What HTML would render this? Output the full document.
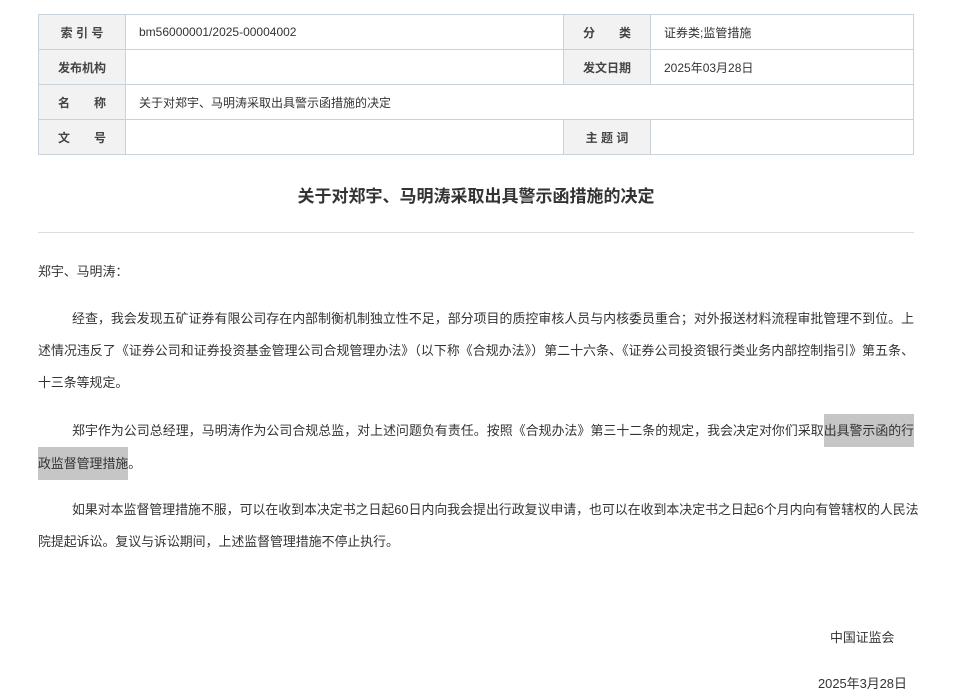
<!DOCTYPE html>
<html><head><meta charset="utf-8"><style>
body{margin:0;background:#fff;font-family:"Liberation Sans","Noto Sans CJK SC",sans-serif;color:#333;width:962px;height:699px;overflow:hidden;position:relative}
table{position:absolute;left:38px;top:14px;border-collapse:collapse;font-size:12px;width:876px}
td{border:1px solid #c8d2dc;height:34px;padding:0;color:#333}
td.h{background:#f2f2f2;font-weight:bold;text-align:center;width:86px;color:#444}
td.v{padding-left:13px}
h1{position:absolute;left:38px;width:876px;top:182px;margin:0;text-align:center;font-size:17px;font-weight:bold;color:#333}
.hr{position:absolute;left:38px;width:876px;top:232px;border-top:1px solid #ddd}
.t{position:absolute;left:38px;width:876px;font-size:12.9px;line-height:32px}
.l{display:block;white-space:nowrap;text-align:justify;text-align-last:justify}
.e{display:block;white-space:nowrap}
.i{padding-left:34px}
.hl{background:#c6c6c6;display:inline-block;line-height:33px}
</style></head><body>
<table>
<tr><td class="h">索 引 号</td><td class="v" style="width:424px">bm56000001/2025-00004002</td><td class="h">分　　类</td><td class="v">证券类;监管措施</td></tr>
<tr><td class="h">发布机构</td><td class="v"></td><td class="h">发文日期</td><td class="v">2025年03月28日</td></tr>
<tr><td class="h">名　　称</td><td class="v" colspan="3">关于对郑宇、马明涛采取出具警示函措施的决定</td></tr>
<tr><td class="h">文　　号</td><td class="v"></td><td class="h">主 题 词</td><td class="v"></td></tr>
</table>
<h1>关于对郑宇、马明涛采取出具警示函措施的决定</h1>
<div class="hr"></div>
<div class="t" style="top:256px">郑宇、马明涛：</div>
<div class="t" style="top:303px"><span class="l i">经查，我会发现五矿证券有限公司存在内部制衡机制独立性不足，部分项目的质控审核人员与内核委员重合；对外报送材料流程审批管理不到位。上</span><span class="l">述情况违反了《证券公司和证券投资基金管理公司合规管理办法》（以下称《合规办法》）第二十六条、《证券公司投资银行类业务内部控制指引》第五条、</span><span class="e">十三条等规定。</span></div>
<div class="t" style="top:414px"><span class="l i">郑宇作为公司总经理，马明涛作为公司合规总监，对上述问题负有责任。按照《合规办法》第三十二条的规定，我会决定对你们采取<span class="hl">出具警示函的行</span></span><span class="e"><span class="hl">政监督管理措施</span>。</span></div>
<div class="t" style="top:494px"><span class="l i">如果对本监督管理措施不服，可以在收到本决定书之日起60日内向我会提出行政复议申请，也可以在收到本决定书之日起6个月内向有管辖权的人民法</span><span class="e">院提起诉讼。复议与诉讼期间，上述监督管理措施不停止执行。</span></div>
<div class="t" style="top:622px;left:830px;width:auto">中国证监会</div>
<div class="t" style="top:668px;left:818px;width:auto">2025年3月28日</div>
</body></html>
